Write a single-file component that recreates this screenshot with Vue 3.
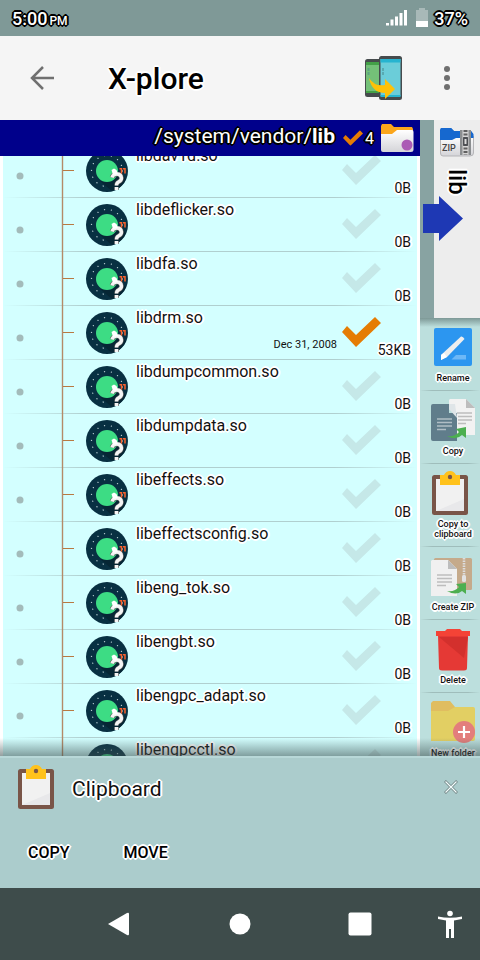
<script setup>
import { ref } from 'vue'

const files = ref([
  { name: 'libdav1d.so', size: '0B' },
  { name: 'libdeflicker.so', size: '0B' },
  { name: 'libdfa.so', size: '0B' },
  { name: 'libdrm.so', size: '53KB', date: 'Dec 31, 2008', checked: true },
  { name: 'libdumpcommon.so', size: '0B' },
  { name: 'libdumpdata.so', size: '0B' },
  { name: 'libeffects.so', size: '0B' },
  { name: 'libeffectsconfig.so', size: '0B' },
  { name: 'libeng_tok.so', size: '0B' },
  { name: 'libengbt.so', size: '0B' },
  { name: 'libengpc_adapt.so', size: '0B' },
  { name: 'libengpcctl.so', size: '0B' },
])

const actions = [
  { label: 'Rename', icon: 'rename' },
  { label: 'Copy', icon: 'copy' },
  { label: 'Copy to clipboard', icon: 'clipboard' },
  { label: 'Create ZIP', icon: 'archive' },
  { label: 'Delete', icon: 'delete' },
  { label: 'New folder', icon: 'folder' },
]
</script>

<template>
  <div class="screen">
    <svg class="sprite" aria-hidden="true">
      <defs>
        <linearGradient id="paper" x1="0" y1="0" x2="0" y2="1">
          <stop offset="0" stop-color="#ffffff" /><stop offset="1" stop-color="#d4d4d8" />
        </linearGradient>
      </defs>
      <symbol id="i-rename" viewBox="0 0 44 44">
        <rect x="3" y="3" width="38" height="38" rx="2" fill="#2c96f0" />
        <path d="M10 35V30L30 11.500Q32 11 33.500 14L16 32Z" fill="#eeeeee" />
        <path d="M10 35V30L13 28 16 32Z" fill="#fff" />
        <path d="M25 30H35V34.500H20.500Z" fill="#6db8f7" />
      </symbol>
      <symbol id="i-copy" viewBox="0 0 44 44">
        <path d="M2 6H18V15H26V43H2Q0 43 0 41V8Q0 6 2 6Z" fill="#607d8b" />
        <path d="M19 1H35L44 10V37H26V15L18 11V2Z" fill="#f2f2f2" />
        <path d="M18 11V6H24L26 20Z" fill="#dfe5e8" />
        <path d="M35 1 44 10H35Z" fill="#bdbdbd" />
        <path d="M26 15H41M27 18.500H41M27 22H41M27 25.500H35" stroke="#bdbdbd" stroke-width="1.500" />
        <path d="M6 21H21M6 24.500H21M6 28H21M6 31.500H15" stroke="#b0bec5" stroke-width="1.500" />
        <path d="M16 38Q24 39 28 34L25 31 35 29V40L31 37Q25 43 16 38Z" fill="#4caf50" />
      </symbol>
      <symbol id="i-clipboard" viewBox="0 0 44 44">
        <rect x="1" y="4" width="36" height="40" rx="2.500" fill="#795548" />
        <path d="M5 8H33V40H5Z" fill="#f1f1f1" /><path d="M5 40H33V28Z" fill="#e8e8ea" />
        <path d="M9 4H13Q15 0 19 0T25 4H29V14H9Z" fill="#ffc21c" />
        <circle cx="19" cy="6" r="2.200" fill="#795548" />
      </symbol>
      <symbol id="i-archive" viewBox="0 0 44 44">
        <rect x="3" y="4" width="38" height="32" rx="1.500" fill="#c5aa8b" />
        <path d="M33 4V24" stroke="#ddd" stroke-width="2.600" stroke-dasharray="1.500 1" />
        <rect x="31" y="21" width="4" height="7" rx="1.500" fill="#e2e2e2" />
        <path d="M1 6H17L26 15V42H0V7Z" fill="#f0f0f0" />
        <path d="M17 6 26 15H17Z" fill="#bdbdbd" />
        <path d="M6 21H21M6 24.500H21M6 28H21M6 31.500H15" stroke="#bdbdbd" stroke-width="1.500" />
        <path d="M16 37Q24 38 28 33L25 30 35 29V40L31 37Q25 42 16 37Z" fill="#4caf50" />
      </symbol>
      <symbol id="i-delete" viewBox="0 0 44 44">
        <path d="M7 8H37L36 41Q36 43.500 33 43.500H11Q8 43.500 8 41Z" fill="#e53935" />
        <path d="M8 10H37L33 31Z" fill="#d3302d" />
        <path d="M5 4H14L16 2H29L31 4H39V9H5Z" fill="#f44336" />
      </symbol>
      <symbol id="i-folder" viewBox="0 0 44 44">
        <path d="M2 1H19L24 7H40V35H0V3Z" fill="#e0bd60" />
        <path d="M0 11H17L24 7H42Q44 7 44 9V39Q44 41 42 41H0Z" fill="#e2cf63" />
        <circle cx="33" cy="32" r="11" fill="#e37e7c" />
        <path d="M33 26V38M27 32H39" stroke="#fff" stroke-width="2.200" />
      </symbol>
      <symbol id="i-tick" viewBox="0 0 39 30">
        <path d="M0 15 5 9 14.500 18.500 33 0 39 6 14.500 30Z" />
      </symbol>
      <symbol id="i-system-file" viewBox="0 0 42 42">
        <circle cx="21" cy="21" r="21" fill="#083042" />
        <circle cx="21" cy="21" r="15.500" fill="none" stroke="#b4c9ce" stroke-width="1.300" stroke-linecap="round" stroke-dasharray="0.1 6.900" />
        <path d="M14 31 21 32 32 22 40 29A21 21 0 0 1 26 41Z" fill="#062634" />
        <circle cx="21" cy="21" r="11" fill="#3ddc84" />
        <path d="M26 27.500Q27 24 31 24T35.500 28Q35.500 30.500 32.500 32Q30.500 33 30.500 35.500M30.500 37V40" fill="none" stroke="#5c5c5c" stroke-width="4.600" />
        <path d="M26 27.500Q27 24 31 24T35.500 28Q35.500 30.500 32.500 32Q30.500 33 30.500 35.500M30.500 37V40" fill="none" stroke="#f4f4f4" stroke-width="3.400" />
        <path d="M25.500 20 28 18.500 30.500 20 32 24 27 25Z" fill="#fff" />
        <path d="M33.500 18.700H35.500V23.500M37 18.700H39V23.500" fill="none" stroke="#f9602c" stroke-width="1.500" />
      </symbol>
    </svg>

    <header class="status">
      <span class="clock">5:00<small>PM</small></span>
      <span class="indicators">
        <svg width="22" height="16" viewBox="0 0 22 16" aria-hidden="true">
          <path d="M0 13H3V15.500H0ZM4.500 9.500H7.500V15.500H4.500ZM9 6.500H12V15.500H9ZM13.500 3H16.500V15.500H13.500ZM18 0H21V15.500H18Z" fill="#fff" />
        </svg>
        <svg class="battery" width="12" height="20" viewBox="0 0 12 20" aria-hidden="true">
          <path d="M3 0H9V2H12V13H0V2H3Z" fill="#a8b9b8" /><path d="M0 13H12V19H0Z" fill="#fff" />
        </svg>
        <span>37%</span>
      </span>
    </header>

    <div class="appbar">
      <button class="plain" aria-label="Back">
        <svg width="24" height="24" viewBox="0 0 24 24"><path d="M13 1 2 12 13 23M2 12H24" fill="none" stroke="#707070" stroke-width="2.500" /></svg>
      </button>
      <h1>X-plore</h1>
      <button class="plain transfer" aria-label="Swap devices">
        <svg width="38" height="44" viewBox="0 0 38 44">
          <rect x="0" y="3" width="18" height="38" rx="2.500" fill="#464b4d" />
          <path d="M1 6H17V37H1Z" fill="#74c178" /><path d="M1 6H17V9H1ZM1 35H17V37H1Z" fill="#43a047" />
          <rect x="14" y="0" width="23" height="44" rx="2.500" fill="#464b4d" />
          <path d="M15.500 3H35.500V40H15.500Z" fill="#6bcdd9" /><path d="M15.500 3H35.500V6.500H15.500ZM15.500 39H35.500V41H15.500Z" fill="#26b4d0" />
          <path d="M3.500 12V15M3.500 16V19M18 12V15M18 16V19" stroke="#47888b" stroke-width="2" opacity=".5" />
          <path d="M4 22Q10 31 20 29V23L30 33 20 43V37Q7 37 4 22Z" fill="#ffc107" />
        </svg>
      </button>
      <button class="plain" aria-label="More options">
        <svg width="8" height="26" viewBox="0 0 8 26" fill="#6f6f6f"><circle cx="4" cy="4" r="3" /><circle cx="4" cy="13" r="3" /><circle cx="4" cy="22" r="3" /></svg>
      </button>
    </div>

    <main class="body">
      <section class="pane">
        <div class="path">
          <span class="route">/system/vendor/<b>lib</b></span>
          <svg class="path-tick" width="20" height="16" viewBox="0 0 39 30" aria-hidden="true"><use href="#i-tick" /></svg>
          <span class="count">4</span>
          <svg class="path-folder" width="34" height="30" viewBox="0 0 34 30" aria-hidden="true">
            <path d="M2 1H11L14 4H32L33 6V18H1V3Z" fill="#fba61c" />
            <path d="M1 11H12L17 7H32Q33.500 7 33.500 9V27Q33.500 29 31 29H3Q1 29 1 27Z" fill="url(#paper)" />
            <circle cx="27" cy="22" r="5.500" fill="#ab5cb5" />
          </svg>
        </div>
        <div class="viewport">
          <ul class="files">
            <li v-for="(file, i) in files" :key="file.name">
              <svg class="gutter" viewBox="0 0 83 54" aria-hidden="true">
                <circle cx="17" cy="32" r="3.500" fill="#a3bbba" />
                <path d="M59.500 0V54" stroke="#b48a68" stroke-width="1.400" />
                <path d="M60 26.500H71" stroke="#b87942" />
              </svg>
              <svg class="file-icon" viewBox="0 0 42 42" aria-hidden="true"><use href="#i-system-file" /></svg>
              <label class="name" :for="'file-' + i">{{ file.name }}</label>
              <time v-if="file.date" class="date">{{ file.date }}</time>
              <input :id="'file-' + i" v-model="file.checked" class="check" type="checkbox">
              <span class="size">{{ file.size }}</span>
            </li>
          </ul>
        </div>
      </section>

      <aside class="side">
        <div class="tabs">
          <button class="tab">
            <svg width="36" height="30" viewBox="0 0 36 30" aria-hidden="true">
              <path d="M2 1H12L15 4H32L34 7V18H1V3Z" fill="#1668cf" />
              <path d="M1.500 12H13L17 9H34.500V26Q34.500 29 31 29H4Q1.500 29 1.500 26Z" fill="url(#paper)" stroke="#b5b5b8" />
              <path d="M1 10V4L2 1H12L15 4H32L34.500 7V11H17L13 13H1Z" fill="#1668cf" />
              <path d="M21 3H32V28H21Z" fill="#8b8e90" /><path d="M23.500 3H29.500V28H23.500Z" fill="#d6d6d6" />
              <path d="M26.500 3V28" stroke="#606060" stroke-width="4" stroke-dasharray="2 1.500" />
              <rect x="24" y="10" width="5" height="9" rx="1" fill="#4c4f53" /><path d="M26.500 12V17" stroke="#ddd" stroke-width="2" />
              <text x="3" y="24" class="zip">ZIP</text>
            </svg>
            <span>lib</span>
          </button>
          <svg class="arrow" width="40" height="45" viewBox="0 0 40 45" aria-hidden="true"><path d="M0 8H16V0L40 22.500 16 45V37H0Z" fill="#1e38b4" /></svg>
        </div>
        <div class="actions">
          <button v-for="a in actions" :key="a.label">
            <svg width="44" height="44" aria-hidden="true"><use :href="'#i-' + a.icon" /></svg>
            <span>{{ a.label }}</span>
          </button>
        </div>
      </aside>
    </main>

    <section class="clipboard">
      <div class="clipboard-head">
        <svg width="44" height="44" aria-hidden="true"><use href="#i-clipboard" /></svg>
        <h2>Clipboard</h2>
        <button class="plain" aria-label="Close clipboard">
          <svg width="14" height="14" viewBox="0 0 14 14"><path d="M1 1 13 13M13 1 1 13" stroke="#6a7b7b" stroke-width="2.600" /><path d="M1.500 1.500 12.500 12.500M12.500 1.500 1.500 12.500" stroke="#f4ffff" stroke-width="1.300" /></svg>
        </button>
      </div>
      <div class="clipboard-actions">
        <button class="plain">COPY</button>
        <button class="plain">MOVE</button>
      </div>
    </section>

    <nav class="sysnav">
      <button class="plain back" aria-label="Back"><svg width="26" height="26" viewBox="0 0 26 26"><path d="M1 13 20 2Q22 1 22 3V23Q22 25 20 24Z" /></svg></button>
      <button class="plain" aria-label="Home"><svg width="24" height="24" viewBox="0 0 24 24"><circle cx="12" cy="12" r="10.500" /></svg></button>
      <button class="plain" aria-label="Recent apps"><svg width="24" height="24" viewBox="0 0 24 24"><rect x="0.500" y="0.500" width="23" height="23" rx="2" /></svg></button>
      <button class="plain" aria-label="Accessibility"><svg width="24" height="28" viewBox="0 0 24 28"><circle cx="12" cy="3.500" r="2.800" /><path d="M0 6.500Q12 9 24 6.500V9L16 10.500V28H13V19H11V28H8V10.500L0 9Z" /></svg></button>
    </nav>
  </div>
</template>

<style>
body {
  margin: 0;
}
</style>

<style scoped>
.screen {
  --halo: 2px 0 0 #fff, -2px 0 0 #fff, 0 2px 0 #fff, 0 -2px 0 #fff, 1px 1px 0 #fff, -1px 1px 0 #fff, 1px -1px 0 #fff, -1px -1px 0 #fff, 0 0 2px #fff;
  --dark-halo: 2px 0 0 #000, -2px 0 0 #000, 0 2px 0 #000, 0 -2px 0 #000, 1px 1px 0 #000, -1px 1px 0 #000, 1px -1px 0 #000, -1px -1px 0 #000, 0 0 2px #000;
  display: flex;
  flex-direction: column;
  height: 100vh;
  overflow: hidden;
  font-family: Roboto, sans-serif;
  color: #111;
}
.sprite {
  position: absolute;
  width: 0;
  height: 0;
}
svg {
  display: block;
  flex: none;
}
button {
  font: inherit;
  color: inherit;
  border: 0;
  padding: 0;
  cursor: pointer;
}
.plain {
  background: none;
}
h1,
h2,
ul {
  margin: 0;
  padding: 0;
  font-weight: 400;
}
.zip {
  font: 500 9px Roboto, sans-serif;
  fill: #444;
}
.status {
  display: flex;
  align-items: center;
  justify-content: space-between;
  height: 36px;
  padding: 0 12px;
  background: #7f9997;
  color: #fff;
  font-size: 18px;
  font-weight: 500;
  text-shadow: var(--dark-halo);
}
.clock {
  display: flex;
  align-items: baseline;
  gap: 2px;
}
.clock small {
  font-size: 12px;
}
.indicators {
  display: flex;
  align-items: center;
}
.battery {
  margin: 0 6px 0 8px;
}
.appbar {
  display: flex;
  align-items: center;
  height: 84px;
  padding: 0 29px 0 30px;
  background: #f5f5f5;
}
.appbar h1 {
  flex: 1;
  margin-left: 54px;
  font-size: 30px;
  font-weight: 500;
  color: #000;
  text-shadow: var(--halo);
}
.transfer {
  margin-right: 40px;
}
.body {
  display: flex;
  flex: 1;
  min-height: 0;
}
.pane {
  display: flex;
  flex: 1;
  flex-direction: column;
  min-width: 0;
}
.path {
  display: flex;
  align-items: center;
  justify-content: flex-end;
  height: 36px;
  flex: none;
  padding-right: 6px;
  background: #00008b;
  color: #fff;
  text-shadow: var(--dark-halo);
}
.route {
  margin-top: -4px;
  font-size: 21px;
}
.path-tick {
  margin: 0 2px 0 8px;
  fill: #e57c04;
}
.count {
  font-size: 16px;
}
.path-folder {
  margin-left: 6px;
}
.viewport {
  flex: 1;
  min-height: 0;
  overflow: hidden;
  border: solid #fff;
  border-width: 0 3px;
  background: #d3ffff;
}
.files {
  margin-top: -12px;
  list-style: none;
}
.files li {
  display: grid;
  grid-template-columns: 83px 50px 1fr 39px 30px;
  grid-template-rows: 54px;
  padding-right: 6px;
  background: linear-gradient(90deg, transparent, #b0cfcf 20%, #b0cfcf 80%, transparent) bottom / 100% 1px no-repeat;
}
.gutter {
  width: 83px;
  height: 54px;
}
.file-icon {
  width: 42px;
  height: 42px;
  margin-top: 6px;
}
.name {
  grid-area: 1 / 3;
  margin-top: 2px;
  font-size: 16px;
  line-height: 20px;
  align-self: start;
  text-shadow: var(--halo);
}
.date {
  grid-area: 1 / 3;
  place-self: end;
  margin: 0 5px 7px 0;
  font-size: 11px;
  line-height: 16px;
}
.check {
  grid-area: 1 / 4;
  width: 39px;
  height: 30px;
  margin: 11px 0 0;
  appearance: none;
  background: #c5e8e8;
  clip-path: polygon(0 15px, 5px 9px, 14px 18px, 33px 0, 39px 6px, 14px 30px);
}
.check:checked {
  background: #e57c04;
}
.size {
  grid-area: 1 / 5;
  place-self: end;
  margin-bottom: 2px;
  font-size: 14px;
  line-height: 16px;
  white-space: nowrap;
  text-shadow: var(--halo);
}
.side {
  display: flex;
  flex-direction: column;
  width: 60px;
  flex: none;
  overflow: hidden;
}
.tabs {
  position: relative;
  display: flex;
  height: 198px;
  flex: none;
  padding-left: 14px;
  background: #88a3a2;
}
.tab {
  display: flex;
  flex: 1;
  flex-direction: column;
  align-items: center;
  gap: 12px;
  padding-top: 7px;
  background: #ededed;
}
.tab span {
  writing-mode: vertical-rl;
  font-size: 24px;
  font-weight: 500;
  line-height: 26px;
  color: #000;
  text-shadow: var(--halo);
}
.arrow {
  position: absolute;
  top: 76px;
  left: 3px;
}
.actions {
  flex: 1;
  min-height: 0;
  overflow: hidden;
  background: linear-gradient(#7d9896, #bcdfdd 9px);
}
.actions button {
  display: flex;
  flex-direction: column;
  align-items: center;
  width: 100%;
  padding: 7px 0 8px 6px;
  background: linear-gradient(90deg, transparent, #9fbdbb 20%, #9fbdbb 80%, transparent) bottom / 100% 1px no-repeat;
}
.actions span {
  margin-top: 4px;
  font-size: 9px;
  font-weight: 500;
  line-height: 10px;
  text-shadow: var(--halo);
}
.clipboard {
  position: relative;
  height: 132px;
  flex: none;
  box-sizing: border-box;
  border-top: 2px solid #b8d8d8;
  background: #abcccc;
}
.clipboard::before {
  content: "";
  position: absolute;
  inset: -20px 0 auto;
  height: 18px;
  background: linear-gradient(rgb(60 80 80 / 0), rgb(60 80 80 / 55%));
  pointer-events: none;
}
.clipboard-head {
  display: flex;
  align-items: center;
  padding: 7px 22px 0 17px;
}
.clipboard h2 {
  flex: 1;
  margin-left: 11px;
  padding-top: 3px;
  font-size: 21px;
  text-shadow: var(--halo);
}
.clipboard-actions {
  display: flex;
  gap: 54px;
  padding: 34px 28px 0;
}
.clipboard-actions button {
  font-size: 16px;
  font-weight: 500;
  line-height: 20px;
  color: #000;
  text-shadow: var(--halo);
}
.sysnav {
  display: grid;
  grid-template-columns: 1fr 2fr 2fr 2fr 1fr;
  height: 72px;
  flex: none;
  background: #3e4c4b;
  fill: #fff;
}
.sysnav button {
  display: flex;
  align-items: center;
  justify-content: center;
}
.sysnav .back {
  grid-column: 2;
}
</style>
